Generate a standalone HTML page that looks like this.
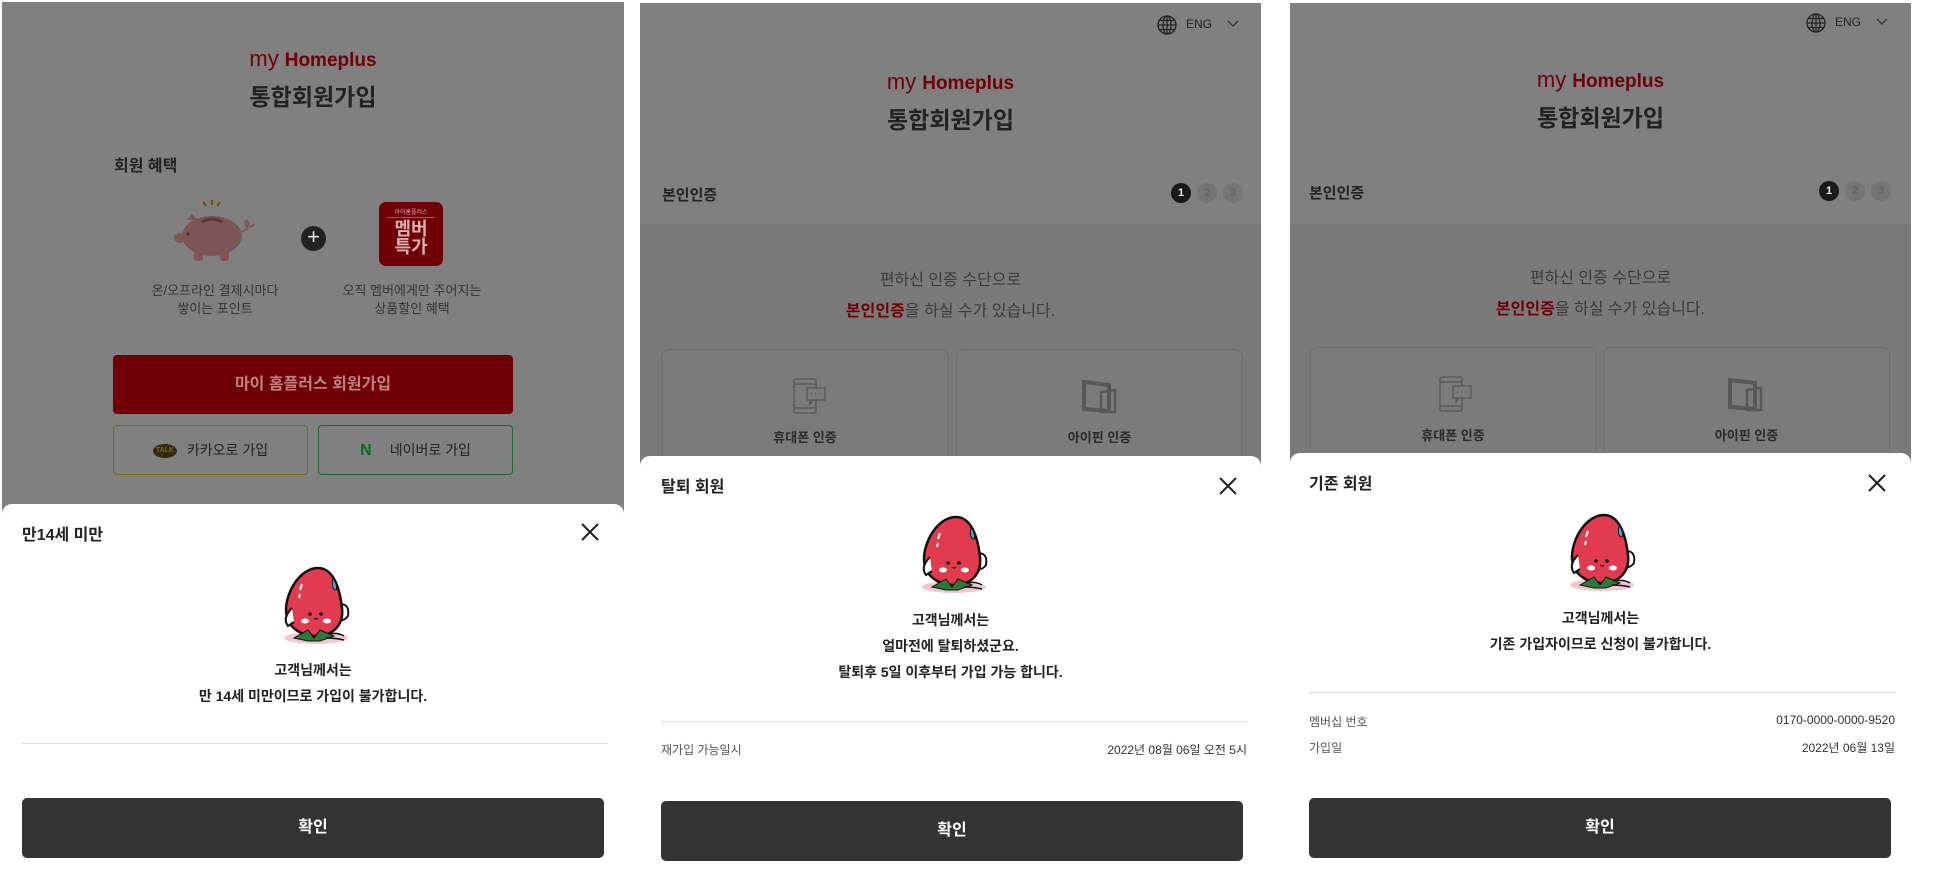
<!DOCTYPE html>
<html><head><meta charset="utf-8"><style>
*{margin:0;padding:0;box-sizing:border-box}
body{width:1957px;height:869px;background:#fff;position:relative;overflow:hidden;font-family:"Liberation Sans","Noto Sans CJK KR",sans-serif;color:#222}
.a{position:absolute}
.panel{position:absolute;top:3px;height:866px;background:#808080;overflow:hidden}
.c{text-align:center}
.logo{font-weight:bold;color:#6e0006;font-size:19px;white-space:nowrap}
.logo i{font-style:normal;font-weight:normal;font-size:22px;margin-right:6px}
.title{font-size:23px;font-weight:bold;color:#222}
.sheet{position:absolute;background:#fff;border-radius:10px 10px 0 0;left:0;right:0;bottom:0}
.st{font-size:16px;font-weight:bold;color:#222}
.msg{font-size:14px;line-height:26px;color:#222;font-weight:bold}
.btn{position:absolute;height:60px;background:#333;border-radius:5px;color:#fff;font-weight:bold;font-size:16px;text-align:center;line-height:60px}
.hr{position:absolute;height:1px;background:#ddd}
.row{font-size:12px;color:#555}
.band{position:absolute;left:0;right:0;top:221px;bottom:0;background:#7a7a7a}
.card{position:absolute;top:346px;height:200px;border:1px solid #6e6e6e;border-radius:8px;background:#7b7b7b}
.lab{font-size:13px;font-weight:bold;color:#2a2a2a}
.step{position:absolute;width:20px;height:20px;border-radius:50%;font-size:11px;text-align:center;line-height:20px;font-weight:bold}
</style></head><body>

<!-- PANEL 1 -->
<div class="panel" style="left:2px;width:622px;top:2px">
  <div class="a c logo" style="left:0;width:622px;top:44px"><i>my</i>Homeplus</div>
  <div class="a c title" style="left:0;width:622px;top:76px">통합회원가입</div>
  <div class="a" style="left:112px;top:150px;font-size:16px;font-weight:bold;color:#222">회원 혜택</div>
  <svg class="a" style="left:170px;top:196px" width="84" height="66" viewBox="0 0 84 66">
    <g stroke="#7a4a10" stroke-width="2"><line x1="31" y1="4" x2="34" y2="8"/><line x1="40" y1="2" x2="40" y2="7"/><line x1="48" y1="4" x2="45" y2="8"/></g>
    <ellipse cx="40" cy="38" rx="30" ry="20" fill="#7e5555"/>
    <path d="M15 22 L20 16 L26 22Z" fill="#7e5555"/>
    <ellipse cx="8" cy="40" rx="6" ry="5" fill="#7e5555"/>
    <rect x="22" y="50" width="9" height="13" rx="3" fill="#7e5555"/><rect x="48" y="50" width="9" height="13" rx="3" fill="#7e5555"/>
    <path d="M30 24 Q40 18 50 24" stroke="#5a3838" stroke-width="3" fill="none"/>
    <path d="M70 34 Q78 30 76 24 Q72 20 74 28 Q80 30 82 26" stroke="#7e5555" stroke-width="2" fill="none"/>
    <circle cx="16" cy="36" r="1.5" fill="#333"/>
  </svg>
  <div class="a" style="left:299px;top:224px;width:25px;height:25px;border-radius:50%;background:#222"></div>
  <div class="a c" style="left:299px;top:222px;width:25px;color:#ddd;font-size:22px;line-height:26px">+</div>
  <div class="a" style="left:377px;top:200px;width:64px;height:64px;border-radius:7px;background:#700008;color:#d8b0b0;text-align:center">
    <div style="font-size:6px;margin-top:5px;border-bottom:1px solid #a55;margin-left:8px;margin-right:8px;padding-bottom:1px">아이홈플러스</div>
    <div style="font-size:18px;font-weight:bold;line-height:18px;margin-top:2px">멤버<br>특가</div>
  </div>
  <div class="a c" style="left:113px;width:200px;top:280px;font-size:13px;line-height:18px;color:#333">온/오프라인 결제시마다<br>쌓이는 포인트</div>
  <div class="a c" style="left:310px;width:200px;top:280px;font-size:13px;line-height:18px;color:#333">오직 멤버에게만 주어지는<br>상품할인 혜택</div>
  <div class="a c" style="left:111px;top:353px;width:400px;height:59px;background:#6e0006;border-radius:4px;color:#c08080;font-size:16px;font-weight:bold;line-height:59px">마이 홈플러스 회원가입</div>
  <div class="a c" style="left:111px;top:423px;width:195px;height:50px;border:1px solid #7a6a12;border-radius:4px;font-size:14px;line-height:48px;color:#222"><span style="display:inline-block;background:#332a10;color:#7a6a12;font-size:7px;font-weight:bold;width:24px;height:14px;line-height:14px;border-radius:50%;margin-right:10px;vertical-align:middle">TALK</span>카카오로 가입</div>
  <div class="a c" style="left:316px;top:423px;width:195px;height:50px;border:1px solid #1e6a2e;border-radius:4px;font-size:14px;line-height:48px;color:#222"><b style="color:#0a6a1e;font-size:16px;margin-right:18px">N</b>네이버로 가입</div>
  <div class="sheet" style="top:502px">
    <div class="a st" style="left:20px;top:17px">만14세 미만</div>
    <svg class="a" style="left:578px;top:18px" width="20" height="20"><path d="M2 2L18 18M18 2L2 18" stroke="#222" stroke-width="2"/></svg>
    <svg class="a" style="left:278px;top:60px" width="72" height="82" viewBox="0 0 72 82">
      <ellipse cx="36" cy="74" rx="32" ry="6" fill="#efc8d0"/>
      <path d="M60 40 Q70 40 68 52 Q64 58 56 56" stroke="#111" stroke-width="2" fill="#fff"/>
      <path d="M38 4 C20 4 6 28 6 46 C6 64 22 72 36 72 C52 72 64 62 62 44 C60 26 54 4 38 4Z" fill="#e23a4e" stroke="#111" stroke-width="2.5"/>
      <path d="M12 44 Q2 54 8 62 L14 58" stroke="#111" stroke-width="2" fill="#fff"/>
      <path d="M53 14 Q58 22 56 26 Q51 26 53 14Z" fill="#4aa8d8" stroke="#111" stroke-width="1"/>
      <circle cx="30" cy="50" r="1.8" fill="#111"/><circle cx="41" cy="50" r="1.8" fill="#111"/>
      <path d="M34 54 Q36 56 38 54" stroke="#111" stroke-width="1.2" fill="none"/>
      <ellipse cx="25" cy="57" rx="4" ry="2.5" fill="#fff"/><ellipse cx="47" cy="57" rx="4" ry="2.5" fill="#fff"/>
      <path d="M14 74 L28 66 L34 74 L40 66 L54 72 L40 77 L28 77Z" fill="#2a7a3a" stroke="#111" stroke-width="1"/>
      <path d="M48 70 Q58 68 64 72 M46 74 Q56 74 64 76" stroke="#111" stroke-width="1.5" fill="none"/>
      <path d="M22 20 L20 26 M20 30 L19 34" stroke="#fff" stroke-width="2"/>
    </svg>
    <div class="a c msg" style="left:0;width:622px;top:153px">고객님께서는<br>만 14세 미만이므로 가입이 불가합니다.</div>
    <div class="hr" style="left:20px;width:586px;top:239px"></div>
    <div class="btn" style="left:20px;width:582px;top:294px">확인</div>
  </div>
</div>

<!-- PANEL 2 -->
<div class="panel" style="left:640px;width:621px">
  <div class="band"></div>
  <svg class="a" style="left:517px;top:12px" width="20" height="20" viewBox="0 0 20 20" fill="none" stroke="#222" stroke-width="1.3"><circle cx="10" cy="10" r="9"/><ellipse cx="10" cy="10" rx="4" ry="9"/><path d="M1 10H19M2.5 5.5H17.5M2.5 14.5H17.5M10 1V19"/></svg>
  <div class="a" style="left:546px;top:14px;font-size:12px;color:#222">ENG</div>
  <svg class="a" style="left:587px;top:17px" width="12" height="8"><path d="M1 1L6 6L11 1" stroke="#333" stroke-width="1.3" fill="none"/></svg>
  <div class="a c logo" style="left:0;width:621px;top:66px"><i>my</i>Homeplus</div>
  <div class="a c title" style="left:0;width:621px;top:98px">통합회원가입</div>
  <div class="a" style="left:22px;top:181px;font-size:15px;font-weight:bold;color:#222">본인인증</div>
  <div class="step" style="left:531px;top:180px;background:#1a1a1a;color:#eee">1</div>
  <div class="step" style="left:557px;top:180px;background:#757575;color:#666">2</div>
  <div class="step" style="left:583px;top:180px;background:#757575;color:#666">3</div>
  <div class="a c" style="left:0;width:621px;top:262px;font-size:16px;line-height:31px;color:#3a3a3a">편하신 인증 수단으로<br><b style="color:#6e0006">본인인증</b>을 하실 수가 있습니다.</div>
  <div class="card" style="left:21px;width:288px"></div>
  <div class="card" style="left:316px;width:287px"></div>
  <svg class="a" style="left:153px;top:375px" width="34" height="36" viewBox="0 0 34 36" fill="none" stroke="#555" stroke-width="1.2"><rect x="1" y="1" width="22" height="34" rx="2"/><path d="M1 6H23M1 30H23"/><rect x="14" y="10" width="18" height="12" fill="#7b7b7b"/><path d="M17 22L17 26L20 22"/><path d="M18 16h1M22 16h1M26 16h1"/></svg>
  <svg class="a" style="left:441px;top:376px" width="38" height="36" viewBox="0 0 38 36" fill="none" stroke="#585858" stroke-width="4"><path d="M3 3L28 6L28 32L3 30Z"/><path d="M20 13L34 11L34 33L20 33Z" stroke-width="2.5"/></svg>
  <div class="a c lab" style="left:21px;width:288px;top:424px">휴대폰 인증</div>
  <div class="a c lab" style="left:316px;width:287px;top:424px">아이핀 인증</div>
  <div class="sheet" style="top:453px">
    <div class="a st" style="left:21px;top:17px">탈퇴 회원</div>
    <svg class="a" style="left:578px;top:20px" width="20" height="20"><path d="M2 2L18 18M18 2L2 18" stroke="#222" stroke-width="2"/></svg>
    <svg class="a" style="left:278px;top:57px" width="72" height="82" viewBox="0 0 72 82">
      <ellipse cx="36" cy="74" rx="32" ry="6" fill="#efc8d0"/>
      <path d="M60 40 Q70 40 68 52 Q64 58 56 56" stroke="#111" stroke-width="2" fill="#fff"/>
      <path d="M38 4 C20 4 6 28 6 46 C6 64 22 72 36 72 C52 72 64 62 62 44 C60 26 54 4 38 4Z" fill="#e23a4e" stroke="#111" stroke-width="2.5"/>
      <path d="M12 44 Q2 54 8 62 L14 58" stroke="#111" stroke-width="2" fill="#fff"/>
      <path d="M53 14 Q58 22 56 26 Q51 26 53 14Z" fill="#4aa8d8" stroke="#111" stroke-width="1"/>
      <circle cx="30" cy="50" r="1.8" fill="#111"/><circle cx="41" cy="50" r="1.8" fill="#111"/>
      <path d="M34 54 Q36 56 38 54" stroke="#111" stroke-width="1.2" fill="none"/>
      <ellipse cx="25" cy="57" rx="4" ry="2.5" fill="#fff"/><ellipse cx="47" cy="57" rx="4" ry="2.5" fill="#fff"/>
      <path d="M14 74 L28 66 L34 74 L40 66 L54 72 L40 77 L28 77Z" fill="#2a7a3a" stroke="#111" stroke-width="1"/>
      <path d="M48 70 Q58 68 64 72 M46 74 Q56 74 64 76" stroke="#111" stroke-width="1.5" fill="none"/>
      <path d="M22 20 L20 26 M20 30 L19 34" stroke="#fff" stroke-width="2"/>
    </svg>
    <div class="a c msg" style="left:0;width:621px;top:151px">고객님께서는<br>얼마전에 탈퇴하셨군요.<br>탈퇴후 5일 이후부터 가입 가능 합니다.</div>
    <div class="hr" style="left:21px;width:586px;top:265px"></div>
    <div class="a row" style="left:21px;top:285px">재가입 가능일시</div>
    <div class="a row" style="right:14px;top:285px;color:#333">2022년 08월 06일 오전 5시</div>
    <div class="btn" style="left:21px;width:582px;top:345px">확인</div>
  </div>
</div>

<!-- PANEL 3 -->
<div class="panel" style="left:1290px;width:621px">
  <div class="band"></div>
  <svg class="a" style="left:516px;top:10px" width="20" height="20" viewBox="0 0 20 20" fill="none" stroke="#222" stroke-width="1.3"><circle cx="10" cy="10" r="9"/><ellipse cx="10" cy="10" rx="4" ry="9"/><path d="M1 10H19M2.5 5.5H17.5M2.5 14.5H17.5M10 1V19"/></svg>
  <div class="a" style="left:545px;top:12px;font-size:12px;color:#222">ENG</div>
  <svg class="a" style="left:586px;top:15px" width="12" height="8"><path d="M1 1L6 6L11 1" stroke="#333" stroke-width="1.3" fill="none"/></svg>
  <div class="a c logo" style="left:0;width:621px;top:64px"><i>my</i>Homeplus</div>
  <div class="a c title" style="left:0;width:621px;top:96px">통합회원가입</div>
  <div class="a" style="left:19px;top:179px;font-size:15px;font-weight:bold;color:#222">본인인증</div>
  <div class="step" style="left:529px;top:178px;background:#1a1a1a;color:#eee">1</div>
  <div class="step" style="left:555px;top:178px;background:#757575;color:#666">2</div>
  <div class="step" style="left:581px;top:178px;background:#757575;color:#666">3</div>
  <div class="a c" style="left:0;width:621px;top:260px;font-size:16px;line-height:31px;color:#3a3a3a">편하신 인증 수단으로<br><b style="color:#6e0006">본인인증</b>을 하실 수가 있습니다.</div>
  <div class="card" style="left:19px;width:288px;top:344px"></div>
  <div class="card" style="left:313px;width:287px;top:344px"></div>
  <svg class="a" style="left:149px;top:373px" width="34" height="36" viewBox="0 0 34 36" fill="none" stroke="#555" stroke-width="1.2"><rect x="1" y="1" width="22" height="34" rx="2"/><path d="M1 6H23M1 30H23"/><rect x="14" y="10" width="18" height="12" fill="#7b7b7b"/><path d="M17 22L17 26L20 22"/><path d="M18 16h1M22 16h1M26 16h1"/></svg>
  <svg class="a" style="left:437px;top:374px" width="38" height="36" viewBox="0 0 38 36" fill="none" stroke="#585858" stroke-width="4"><path d="M3 3L28 6L28 32L3 30Z"/><path d="M20 13L34 11L34 33L20 33Z" stroke-width="2.5"/></svg>
  <div class="a c lab" style="left:19px;width:288px;top:422px">휴대폰 인증</div>
  <div class="a c lab" style="left:313px;width:287px;top:422px">아이핀 인증</div>
  <div class="sheet" style="top:450px">
    <div class="a st" style="left:19px;top:17px">기존 회원</div>
    <svg class="a" style="left:577px;top:20px" width="20" height="20"><path d="M2 2L18 18M18 2L2 18" stroke="#222" stroke-width="2"/></svg>
    <svg class="a" style="left:276px;top:58px" width="72" height="82" viewBox="0 0 72 82">
      <ellipse cx="36" cy="74" rx="32" ry="6" fill="#efc8d0"/>
      <path d="M60 40 Q70 40 68 52 Q64 58 56 56" stroke="#111" stroke-width="2" fill="#fff"/>
      <path d="M38 4 C20 4 6 28 6 46 C6 64 22 72 36 72 C52 72 64 62 62 44 C60 26 54 4 38 4Z" fill="#e23a4e" stroke="#111" stroke-width="2.5"/>
      <path d="M12 44 Q2 54 8 62 L14 58" stroke="#111" stroke-width="2" fill="#fff"/>
      <path d="M53 14 Q58 22 56 26 Q51 26 53 14Z" fill="#4aa8d8" stroke="#111" stroke-width="1"/>
      <circle cx="30" cy="50" r="1.8" fill="#111"/><circle cx="41" cy="50" r="1.8" fill="#111"/>
      <path d="M34 54 Q36 56 38 54" stroke="#111" stroke-width="1.2" fill="none"/>
      <ellipse cx="25" cy="57" rx="4" ry="2.5" fill="#fff"/><ellipse cx="47" cy="57" rx="4" ry="2.5" fill="#fff"/>
      <path d="M14 74 L28 66 L34 74 L40 66 L54 72 L40 77 L28 77Z" fill="#2a7a3a" stroke="#111" stroke-width="1"/>
      <path d="M48 70 Q58 68 64 72 M46 74 Q56 74 64 76" stroke="#111" stroke-width="1.5" fill="none"/>
      <path d="M22 20 L20 26 M20 30 L19 34" stroke="#fff" stroke-width="2"/>
    </svg>
    <div class="a c msg" style="left:0;width:621px;top:152px">고객님께서는<br>기존 가입자이므로 신청이 불가합니다.</div>
    <div class="hr" style="left:19px;width:586px;top:239px"></div>
    <div class="a row" style="left:19px;top:260px">멤버십 번호</div>
    <div class="a row" style="right:16px;top:260px;color:#333">0170-0000-0000-9520</div>
    <div class="a row" style="left:19px;top:286px">가입일</div>
    <div class="a row" style="right:16px;top:286px;color:#333">2022년 06월 13일</div>
    <div class="btn" style="left:19px;width:582px;top:345px">확인</div>
  </div>
</div>
</body></html>
